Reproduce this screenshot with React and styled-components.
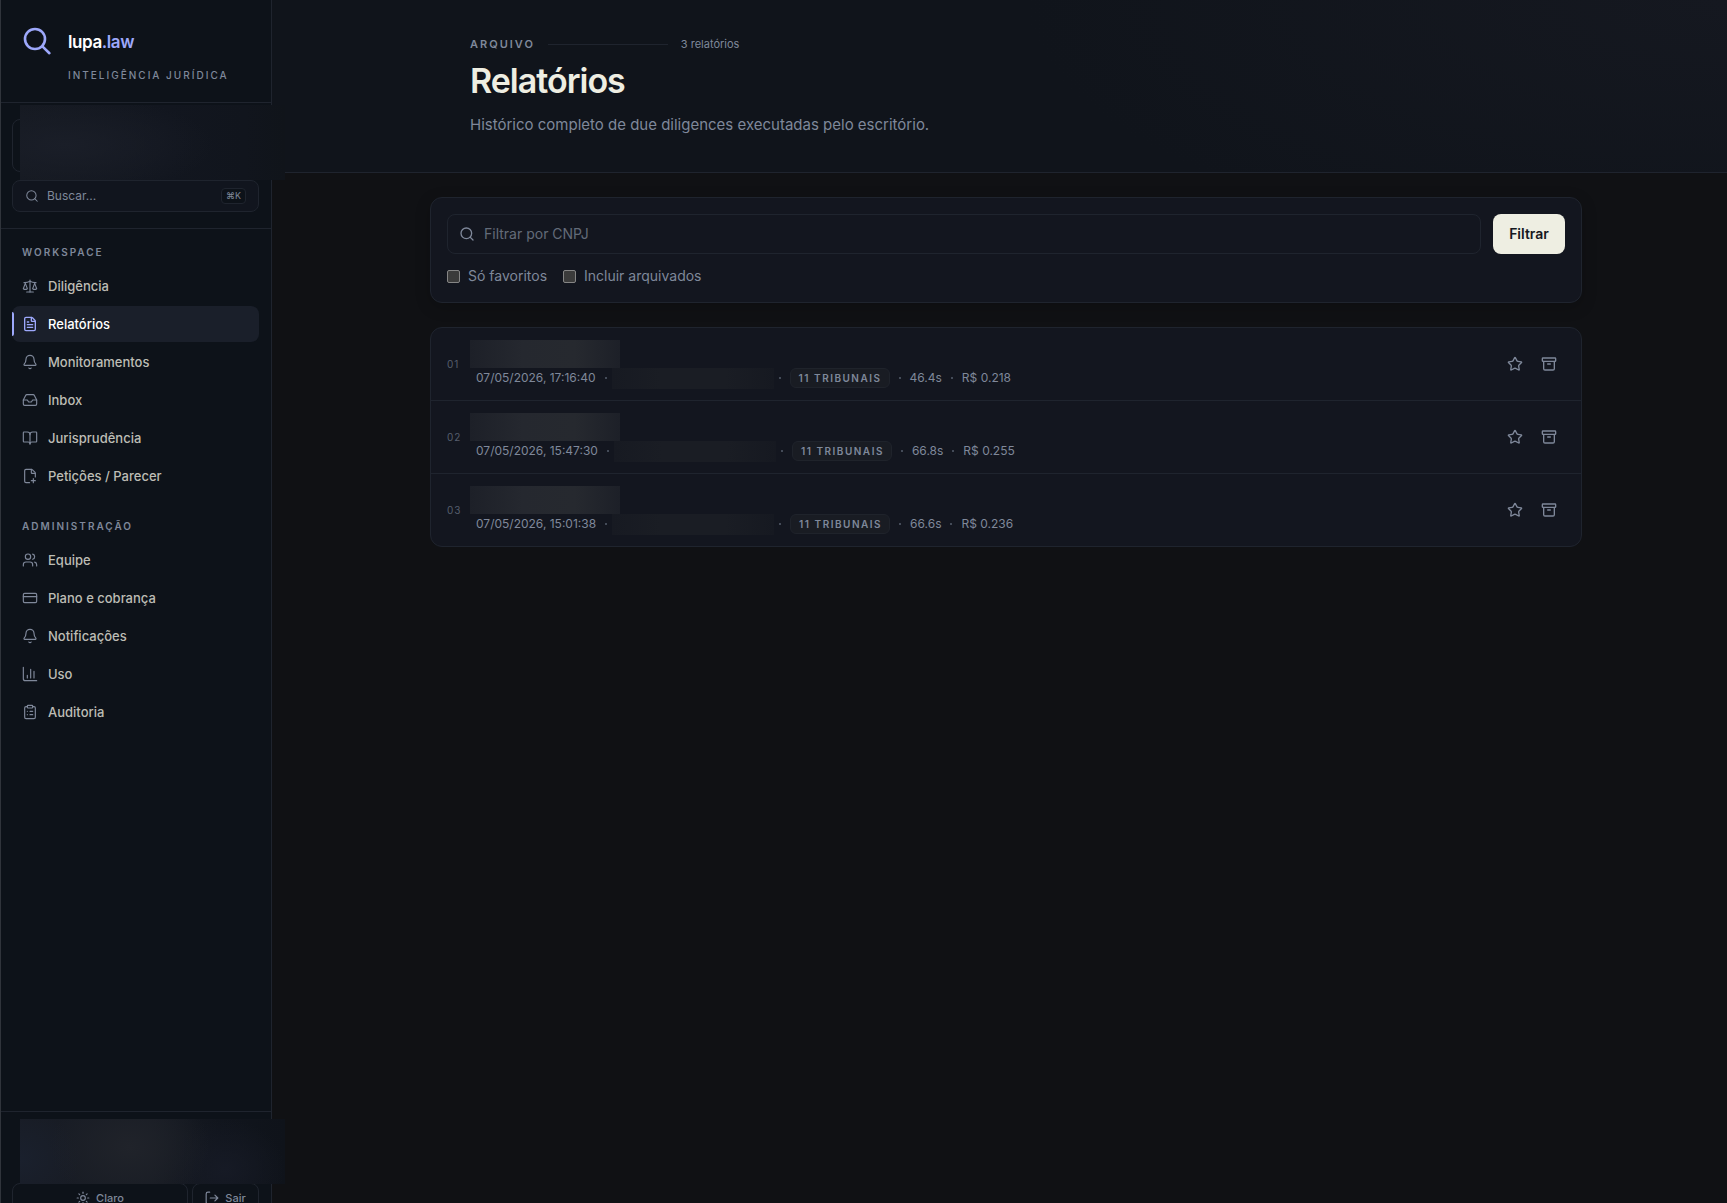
import React from "react";
import styled, { createGlobalStyle } from "styled-components";
import {
  Search, Scale, FileText, Bell, Inbox, BookOpen, FilePlus2, Users, CreditCard,
  ClipboardList, Star, Archive, Sun,
} from "lucide-react";

const c = {
  bg: "#101114",
  side: "#0d1219",
  head: "#10141b",
  card: "#13161f",
  line: "#1f242e",
  muted: "#7f889a",
  dim: "#565e6d",
  text: "#bdbdb5",
  ivory: "#eeeee2",
  accent: "#9da8fb",
};

const GlobalStyle = createGlobalStyle`
  *, *::before, *::after { box-sizing: border-box; }
  body { margin: 0; background: ${c.bg}; color: ${c.text};
    font-family: Inter, "Liberation Sans", sans-serif; font-size: 14px; line-height: 20px;
    -webkit-font-smoothing: antialiased; }
  button, input { font: inherit; }
  a { color: inherit; text-decoration: none; }
`;

const Shell = styled.div`
  display: flex;
  height: 100vh;
  overflow: hidden;
`;

const Sidebar = styled.aside`
  display: flex;
  flex-direction: column;
  flex: none;
  width: 272px;
  height: calc(100vh + 22px);
  background: ${c.side};
  border-left: 1px solid #30343b;
  border-right: 1px solid ${c.line};
`;

const Brand = styled.div`
  display: grid;
  grid-template-columns: 32px 1fr;
  column-gap: 15px;
  row-gap: 12px;
  align-items: center;
  padding: 26px 20px 22px;
  border-bottom: 1px solid ${c.line};
`;

const BrandMark = styled.svg`
  display: block;
  width: 32px;
  height: 32px;
`;

const BrandName = styled.a`
  color: #fff;
  font-size: 17px;
  font-weight: 600;
  letter-spacing: -0.4px;
  line-height: 24px;
  span { color: ${c.accent}; }
`;

const BrandTag = styled.div`
  grid-column: 2;
  color: ${c.muted};
  font-size: 10px;
  font-weight: 500;
  letter-spacing: 2px;
  line-height: 10px;
  white-space: nowrap;
`;

const SideTools = styled.div`
  display: flex;
  flex-direction: column;
  gap: 8px;
  padding: 16px 12px 16px 11px;
  border-bottom: 1px solid ${c.line};
`;

const OrgCard = styled.div`
  position: relative;
  height: 53px;
  border: 1px solid ${c.line};
  border-radius: 8px;
`;

const OrgMask = styled.div`
  position: absolute;
  z-index: 2;
  top: -15px;
  left: 7px;
  width: 265px;
  height: 75px;
  background:
    radial-gradient(ellipse 150px 50px at 44px 40px, #1a1e28, #1a1e2800),
    linear-gradient(90deg, #151921, #12161f 55%, #11151d 85%, #10141a);
`;

const SearchButton = styled.button`
  display: flex;
  align-items: center;
  gap: 8px;
  height: 32px;
  padding: 0 12px;
  color: ${c.muted};
  background: #11151e;
  border: 1px solid ${c.line};
  border-radius: 8px;
  font-size: 12px;
  text-align: left;
  span { flex: 1; }
`;

const Kbd = styled.kbd`
  padding: 0 4px;
  border: 1px solid ${c.line};
  border-radius: 4px;
  background: ${c.side};
  font-family: Inter, "DejaVu Sans", sans-serif;
  font-size: 9px;
  line-height: 14px;
`;

const Nav = styled.nav`
  flex: 1;
  padding: 15px 12px 15px 11px;
`;

const NavTitle = styled.h2`
  margin: 0;
  padding: 0 10px;
  color: ${c.muted};
  font-size: 10px;
  font-weight: 600;
  letter-spacing: 2px;
  line-height: 16px;
`;

const NavList = styled.ul`
  display: grid;
  gap: 2px;
  margin: 8px 0 24px;
  padding: 0;
  list-style: none;
`;

const NavLink = styled.a`
  position: relative;
  display: flex;
  align-items: center;
  gap: 10px;
  height: 36px;
  padding: 0 10px;
  border-radius: 8px;
  color: ${(p) => (p.$active ? "#fff" : c.text)};
  background: ${(p) => (p.$active ? "#1a1f2a" : "transparent")};
  font-size: 13px;
  font-weight: 500;
  svg { flex: none; color: ${(p) => (p.$active ? c.accent : c.muted)}; }
  &::before {
    content: "";
    display: ${(p) => (p.$active ? "block" : "none")};
    position: absolute;
    left: 0;
    top: 6px;
    bottom: 6px;
    width: 2px;
    border-radius: 0 2px 2px 0;
    background: ${c.accent};
  }
`;

const SideFooter = styled.footer`
  position: relative;
  display: grid;
  grid-template-columns: 1fr 67px;
  gap: 4px;
  padding: 71px 12px 12px 11px;
  border-top: 1px solid ${c.line};
`;

const UserMask = styled.div`
  position: absolute;
  z-index: 2;
  top: 7px;
  left: 19px;
  width: 265px;
  height: 65px;
  background:
    radial-gradient(ellipse 80px 60px at 110px 28px, #20232a, #20232a00),
    radial-gradient(ellipse 60px 50px at 0 40px, #1a202d, #1a202d00),
    radial-gradient(ellipse 60px 50px at 205px 50px, #161a25, #161a2500),
    linear-gradient(90deg, #181c25, #181c24 50%, #11151d 75%, #0f131a);
`;

const FooterButton = styled.button`
  display: flex;
  align-items: center;
  justify-content: center;
  gap: 6px;
  height: 30px;
  padding: 0;
  color: ${c.muted};
  background: transparent;
  border: 1px solid ${c.line};
  border-radius: 8px;
  font-size: 11px;
  font-weight: 500;
  line-height: 10px;
`;

const Main = styled.main`
  flex: 1;
  min-width: 0;
`;

const PageHeader = styled.header`
  padding: 36px 32px 36px 45px;
  border-bottom: 1px solid ${c.line};
  background: radial-gradient(ellipse 700px 260px at 100% 0, #151820, ${c.head});
`;

const Container = styled.div`
  max-width: 1152px;
  margin: 0 auto;
  padding: 0 ${(p) => (p.$inset ? "40px" : "0")};
`;

const Eyebrow = styled.div`
  display: flex;
  align-items: center;
  gap: 13px;
  color: ${c.muted};
  font-size: 11px;
  line-height: 16px;
  strong { font-weight: 600; letter-spacing: 2px; }
  hr { width: 120px; margin: 0; border: 0; border-top: 1px solid ${c.line}; }
`;

const Title = styled.h1`
  margin: 9px 0 12px;
  color: ${c.ivory};
  font-size: 34px;
  font-weight: 600;
  letter-spacing: -1px;
  line-height: 40px;
`;

const Lead = styled.p`
  margin: 0;
  color: ${c.muted};
  font-size: 15px;
  line-height: 23px;
`;

const Body = styled.div`
  padding: 24px 32px 24px 45px;
`;

const FilterCard = styled.form`
  display: grid;
  gap: 12px;
  padding: 16px;
  background: ${c.card};
  border: 1px solid ${c.line};
  border-radius: 12px;
  box-shadow: 0 4px 16px rgba(0, 0, 0, 0.2);
`;

const FilterRow = styled.div`
  display: flex;
  align-items: center;
  gap: ${(p) => p.$gap}px;
`;

const Field = styled.label`
  display: flex;
  flex: 1;
  align-items: center;
  gap: 9px;
  height: 40px;
  padding: 0 11px;
  color: ${c.muted};
  border: 1px solid ${c.line};
  border-radius: 8px;
  input {
    flex: 1;
    min-width: 0;
    padding: 0;
    color: ${c.ivory};
    background: transparent;
    border: 0;
    outline: 0;
    font-size: 14px;
  }
  input::placeholder { color: #636b79; }
`;

const Submit = styled.button`
  width: 72px;
  height: 40px;
  padding: 0;
  color: #141720;
  background: ${c.ivory};
  border: 0;
  border-radius: 8px;
  font-size: 14px;
  font-weight: 600;
`;

const Check = styled.label`
  display: flex;
  align-items: center;
  gap: 8px;
  color: ${c.muted};
  input {
    appearance: none;
    width: 13px;
    height: 13px;
    margin: 0;
    background: #3b3b3b;
    border: 1px solid #858585;
    border-radius: 2px;
  }
  input:checked { background: ${c.accent}; }
`;

const List = styled.ol`
  margin: 24px 0 0;
  padding: 0;
  list-style: none;
  background: ${c.card};
  border: 1px solid ${c.line};
  border-radius: 12px;
`;

const Row = styled.li`
  display: grid;
  grid-template-columns: 23px 1fr auto;
  align-items: center;
  height: 72px;
  padding: 0 16px;
  & + & { height: 73px; border-top: 1px solid ${c.line}; }
`;

const Index = styled.span`
  color: ${c.dim};
  font-size: 10px;
  letter-spacing: 1px;
`;

const TitleMask = styled.div`
  width: 150px;
  height: 28px;
  background: linear-gradient(90deg, #1d2028, #25282f 35%, #26292f 70%, #1d2028);
`;

const Meta = styled.div`
  display: flex;
  align-items: center;
  gap: 9px;
  height: 21px;
  padding-left: 6px;
  color: ${c.muted};
  font-size: 12px;
`;

const Dot = styled.span`
  width: 2px;
  height: 2px;
  border-radius: 1px;
  background: ${c.dim};
`;

const NameMask = styled.span`
  width: 162px;
  height: 21px;
  margin: 0 -4px;
  background: linear-gradient(90deg, #171a22, #1a1d24 30%, #1a1d24 70%, #161921);
`;

const Badge = styled.span`
  padding: 0 7px 0 8px;
  color: ${c.muted};
  background: #191c23;
  border: 1px solid #1f232b;
  border-radius: 6px;
  font-size: 10px;
  font-weight: 600;
  letter-spacing: 1.5px;
  line-height: 18px;
`;

const Actions = styled.div`
  display: flex;
  gap: 2px;
`;

const IconButton = styled.button`
  display: grid;
  place-items: center;
  width: 32px;
  height: 32px;
  padding: 0;
  color: ${c.muted};
  background: transparent;
  border: 0;
`;

const UsageIcon = () => (
  <svg width="16" height="16" viewBox="0 0 24 24" fill="none" stroke="currentColor"
    strokeWidth="1.75" strokeLinecap="round" strokeLinejoin="round" aria-hidden="true">
    <path d="M2 2v17a3 3 0 0 0 3 3h17" />
    <path d="M8 18v-4M13 18V5M18 18V8" />
  </svg>
);

const ExitIcon = () => (
  <svg width="14" height="14" viewBox="0 0 24 24" fill="none" stroke="currentColor"
    strokeWidth="2" strokeLinecap="round" strokeLinejoin="round" aria-hidden="true">
    <path d="M8 22H5a3 3 0 0 1-3-3V5a3 3 0 0 1 3-3h3M9 12h13M17 7l5 5-5 5" />
  </svg>
);

const groups = [
  ["WORKSPACE", [
    ["Diligência", Scale], ["Relatórios", FileText], ["Monitoramentos", Bell],
    ["Inbox", Inbox], ["Jurisprudência", BookOpen], ["Petições / Parecer", FilePlus2],
  ]],
  ["ADMINISTRAÇÃO", [
    ["Equipe", Users], ["Plano e cobrança", CreditCard], ["Notificações", Bell],
    ["Uso", UsageIcon], ["Auditoria", ClipboardList],
  ]],
];

const reports = [
  ["01", "07/05/2026, 17:16:40", "46.4s", "R$ 0.218"],
  ["02", "07/05/2026, 15:47:30", "66.8s", "R$ 0.255"],
  ["03", "07/05/2026, 15:01:38", "66.6s", "R$ 0.236"],
];

export default function App() {
  return (
    <Shell>
      <GlobalStyle />
      <Sidebar>
        <Brand>
          <BrandMark viewBox="0 0 32 32" fill="none" stroke={c.accent} strokeWidth="2.6" strokeLinecap="round" aria-hidden="true">
            <circle cx="14" cy="13" r="10" />
            <path d="M21.4 20.4 28.4 27.2" />
          </BrandMark>
          <BrandName href="#">lupa<span>.law</span></BrandName>
          <BrandTag>INTELIGÊNCIA JURÍDICA</BrandTag>
        </Brand>
        <SideTools>
          <OrgCard><OrgMask /></OrgCard>
          <SearchButton type="button">
            <Search size={14} strokeWidth={1.75} />
            <span>Buscar...</span>
            <Kbd>⌘K</Kbd>
          </SearchButton>
        </SideTools>
        <Nav>
          {groups.map(([title, items]) => (
            <React.Fragment key={title}>
              <NavTitle>{title}</NavTitle>
              <NavList>
                {items.map(([label, Icon]) => (
                  <li key={label}>
                    <NavLink href="#" $active={label === "Relatórios"}>
                      <Icon size={16} strokeWidth={label === "Relatórios" ? 2 : 1.75} />
                      {label}
                    </NavLink>
                  </li>
                ))}
              </NavList>
            </React.Fragment>
          ))}
        </Nav>
        <SideFooter>
          <UserMask />
          <FooterButton type="button"><Sun size={14} strokeWidth={2} />Claro</FooterButton>
          <FooterButton type="button"><ExitIcon />Sair</FooterButton>
        </SideFooter>
      </Sidebar>
      <Main>
        <PageHeader>
          <Container $inset>
            <Eyebrow><strong>ARQUIVO</strong><hr /><span>3 relatórios</span></Eyebrow>
            <Title>Relatórios</Title>
            <Lead>Histórico completo de due diligences executadas pelo escritório.</Lead>
          </Container>
        </PageHeader>
        <Body>
          <Container>
            <FilterCard onSubmit={(e) => e.preventDefault()}>
              <FilterRow $gap={12}>
                <Field>
                  <Search size={16} strokeWidth={2} />
                  <input type="text" placeholder="Filtrar por CNPJ" aria-label="Filtrar por CNPJ" />
                </Field>
                <Submit type="submit">Filtrar</Submit>
              </FilterRow>
              <FilterRow $gap={16}>
                <Check><input type="checkbox" />Só favoritos</Check>
                <Check><input type="checkbox" />Incluir arquivados</Check>
              </FilterRow>
            </FilterCard>
            <List>
              {reports.map(([n, date, time, cost]) => (
                <Row key={n}>
                  <Index>{n}</Index>
                  <div>
                    <TitleMask />
                    <Meta>
                      <span>{date}</span><Dot /><NameMask /><Dot />
                      <Badge>11 TRIBUNAIS</Badge><Dot />
                      <span>{time}</span><Dot /><span>{cost}</span>
                    </Meta>
                  </div>
                  <Actions>
                    <IconButton type="button" aria-label="Favoritar"><Star size={16} strokeWidth={2} /></IconButton>
                    <IconButton type="button" aria-label="Arquivar"><Archive size={16} strokeWidth={2} /></IconButton>
                  </Actions>
                </Row>
              ))}
            </List>
          </Container>
        </Body>
      </Main>
    </Shell>
  );
}
